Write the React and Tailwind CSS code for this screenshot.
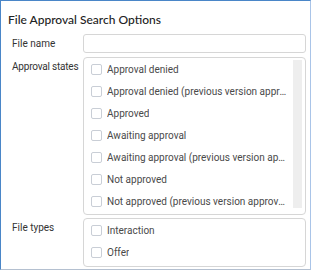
const states = [
  'Approval denied',
  'Approval denied (previous version approved)',
  'Approved',
  'Awaiting approval',
  'Awaiting approval (previous version approved)',
  'Not approved',
  'Not approved (previous version approved)',
]

const types = ['Interaction', 'Offer']

const Row = ({ label }) => (
  <div className="flex items-center h-[22px] pl-[7px] min-w-0">
    <span className="w-[11px] h-[11px] shrink-0 border border-[#c9ced6] rounded-[2px] bg-white" />
    <span className="ml-[5px] truncate text-[10px] text-[#4a4a4a]">{label}</span>
  </div>
)

const App = () => {
  return (
    <div
      className="w-[311px] h-[270px] bg-white border-l border-t border-[#4a86c8] border-r-[#a9c4e8] border-b-[#b4c0d0] border-r border-b overflow-hidden"
      style={{ fontFamily: 'Roboto, sans-serif' }}
    >
      <h1 className="pl-[7px] pt-[11px] text-[12px] font-medium text-[#222] leading-4" style={{ fontFamily: 'Lato, sans-serif' }}>
        File Approval Search Options
      </h1>

      <div className="mt-[6px] pl-[11px] pr-[4px] flex flex-col gap-[4px]">
        <div className="flex items-center">
          <div className="w-[71px] shrink-0 whitespace-nowrap text-[10px] text-[#333]">File name</div>
          <div className="flex-1 min-w-0 h-[19px] border border-[#d6d6d6] rounded-[3px]" />
        </div>

        <div className="flex">
          <div className="w-[71px] shrink-0 whitespace-nowrap text-[10px] tracking-[-0.2px] text-[#333] pt-[2px]">Approval states</div>
          <div className="flex-1 min-w-0 h-[158px] border border-[#d6d6d6] rounded-[4px] flex pb-[6px] pr-[3px]">
            <div className="flex-1 min-w-0 pr-[5px]">
              {states.map(s => <Row key={s} label={s} />)}
            </div>
            <div className="w-[9px] shrink-0 mt-[2px] bg-[#eeeeee]" />
          </div>
        </div>

        <div className="flex -mt-[1px]">
          <div className="w-[71px] shrink-0 whitespace-nowrap text-[10px] text-[#333] pt-[2px]">File types</div>
          <div className="flex-1 min-w-0 h-[49px] border border-[#d6d6d6] rounded-[4px]">
            {types.map(t => <Row key={t} label={t} />)}
          </div>
        </div>
      </div>
    </div>
  )
}

export default App
